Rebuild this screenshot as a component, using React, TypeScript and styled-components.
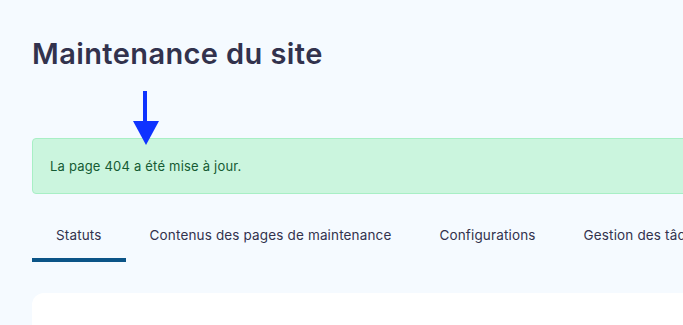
import React from "react";
import styled, { createGlobalStyle } from "styled-components";

const GlobalStyle = createGlobalStyle`
  html, body {
    margin: 0;
    padding: 0;
    background: #f5faff;
    overflow: hidden;
  }
  body {
    font-family: Inter, "Noto Sans", "Liberation Sans", sans-serif;
  }
`;

const tabs = [
  "Statuts",
  "Contenus des pages de maintenance",
  "Configurations",
  "Gestion des tâches",
];

const App = () => {
  return (
    <Page>
      <GlobalStyle />
      <Title>Maintenance du site</Title>
      <AlertWrap>
        <Arrow width="26" height="55" viewBox="0 0 26 55">
          <rect x="10" y="0" width="4" height="32" fill="#0f33ff" />
          <polygon points="0,30 26,30 13,54" fill="#0f33ff" />
        </Arrow>
        <Alert>La page 404 a été mise à jour.</Alert>
      </AlertWrap>
      <Tabs>
        {tabs.map((t, i) => (
          <Tab key={t} active={i === 0}>
            {t}
          </Tab>
        ))}
      </Tabs>
      <Card />
    </Page>
  );
};

const Page = styled.div`
  width: 683px;
  height: 325px;
  padding: 37px 0 0 32px;
  box-sizing: border-box;
  overflow: hidden;
  display: flex;
  flex-direction: column;
`;

const Title = styled.h1`
  margin: 0;
  font-size: 29px;
  line-height: 34px;
  font-weight: 600;
  color: #32324d;
  letter-spacing: 0.4px;
`;

const AlertWrap = styled.div`
  position: relative;
  margin-top: 67px;
`;

const Arrow = styled.svg`
  position: absolute;
  left: 101px;
  top: -47px;
  z-index: 2;
`;

const Alert = styled.div`
  width: 700px;
  height: 56px;
  box-sizing: border-box;
  display: flex;
  align-items: center;
  padding-left: 17px;
  background: #cbf5de;
  border: 1px solid #a8efc5;
  border-radius: 4px;
  color: #155b33;
  font-size: 13px;
  letter-spacing: 0.2px;
`;

const Tabs = styled.div`
  display: flex;
  margin-top: 16px;
  white-space: nowrap;
`;

const Tab = styled.div<{ active?: boolean }>`
  padding: 16px 24px 0;
  height: 52px;
  box-sizing: border-box;
  font-size: 13.5px;
  line-height: 18px;
  letter-spacing: 0.15px;
  color: #32324d;
  border-bottom: 4px solid ${(p) => (p.active ? "#0b5487" : "transparent")};
`;

const Card = styled.div`
  margin-top: 31px;
  width: 700px;
  height: 100px;
  background: #ffffff;
  border-radius: 12px 0 0 0;
`;

export default App;
